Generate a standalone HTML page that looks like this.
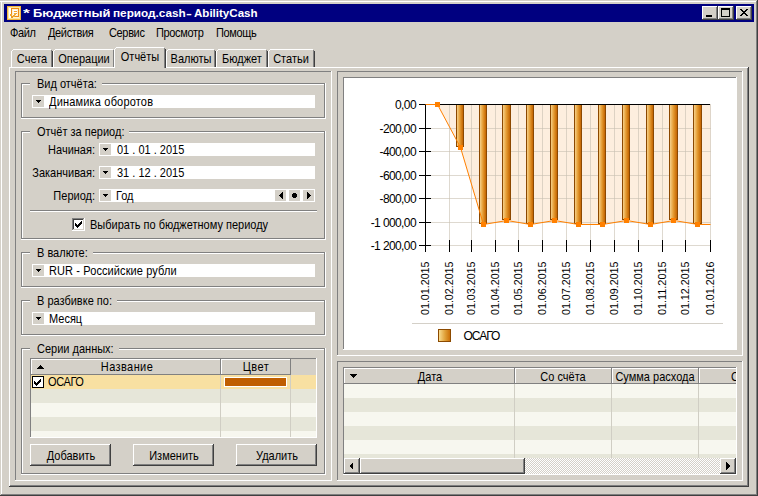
<!DOCTYPE html>
<html><head><meta charset="utf-8">
<style>
*{margin:0;padding:0;box-sizing:border-box}
html,body{width:758px;height:496px;overflow:hidden;background:#D4D0C8}
body{position:relative;font-family:"Liberation Sans",sans-serif;font-size:11px;color:#000}
.a{position:absolute}
.t{position:absolute;white-space:nowrap;line-height:13px;font-size:11px;letter-spacing:0;transform:scaleY(1.12);transform-origin:0 0}
.m{font-size:11px;line-height:13px;letter-spacing:0}
.lbl{position:absolute;background:#D4D0C8;white-space:nowrap;line-height:13px;font-size:11px;letter-spacing:0;padding:0 5px 0 7px}.lbl span{display:inline-block;transform:scaleY(1.12);transform-origin:0 0}
</style></head><body>
<div class="a" style="left:0px;top:1px;width:758px;height:1px;background:#FFFFFF"></div>
<div class="a" style="left:1px;top:1px;width:1px;height:494px;background:#FFFFFF"></div>
<div class="a" style="left:757px;top:0px;width:1px;height:496px;background:#404040"></div>
<div class="a" style="left:0px;top:495px;width:758px;height:1px;background:#404040"></div>
<div class="a" style="left:756px;top:1px;width:1px;height:494px;background:#808080"></div>
<div class="a" style="left:1px;top:494px;width:756px;height:1px;background:#808080"></div>
<div class="a" style="left:4px;top:4px;width:750px;height:18px;background:#000080"></div>
<svg class="a" style="left:7px;top:6px" width="14" height="14" shape-rendering="crispEdges">
 <rect x="0" y="0" width="14" height="14" fill="#F2B640"/>
 <rect x="1" y="1" width="12" height="12" fill="#FCE6A0"/>
 <rect x="2" y="2" width="10" height="10" fill="#FFF3D2"/>
 <rect x="2" y="2" width="2" height="10" fill="#FFFFFF"/>
 <rect x="4" y="2" width="8" height="9" fill="#EE8A14"/>
 <rect x="5" y="3" width="6" height="7" fill="#FFF0D0"/>
 <rect x="6" y="4" width="4" height="1" fill="#FFFFFF"/><rect x="6" y="6" width="4" height="1" fill="#FFFFFF"/><rect x="6" y="8" width="4" height="1" fill="#FFFFFF"/>
 <rect x="7" y="5" width="3" height="1" fill="#F0A030"/><rect x="7" y="7" width="3" height="1" fill="#F0A030"/>
 <rect x="3" y="8" width="2" height="2" fill="#F0A830"/><rect x="4" y="10" width="2" height="2" fill="#E89820"/><rect x="6" y="9" width="2" height="2" fill="#F0A830"/><rect x="7" y="7" width="2" height="2" fill="#F0B040"/>
</svg>
<div class="t" style="left:23px;top:7px;color:#fff;font-weight:bold;font-size:11px;line-height:13px;letter-spacing:0;transform:scaleX(1.6);transform-origin:0 0">*</div>
<div class="t" style="left:33px;top:7px;color:#fff;font-weight:bold;font-size:11px;line-height:13px;letter-spacing:0;transform:scaleX(1.175);transform-origin:0 0">Бюджетный</div>
<div class="t" style="left:112.6px;top:7px;color:#fff;font-weight:bold;font-size:11px;line-height:13px;letter-spacing:0;transform:scaleX(1.07);transform-origin:0 0">период.cash</div>
<div class="t" style="left:185.5px;top:7px;color:#fff;font-weight:bold;font-size:11px;line-height:13px;letter-spacing:0;transform:scaleX(1.6);transform-origin:0 0">-</div>
<div class="t" style="left:194px;top:7px;color:#fff;font-weight:bold;font-size:11px;line-height:13px;letter-spacing:0;transform:scaleX(1.05);transform-origin:0 0">AbilityCash</div>
<div class="a" style="left:702px;top:6px;width:16px;height:14px;background:#D4D0C8"></div>
<div class="a" style="left:702px;top:6px;width:16px;height:1px;background:#FFFFFF"></div>
<div class="a" style="left:702px;top:6px;width:1px;height:14px;background:#FFFFFF"></div>
<div class="a" style="left:702px;top:19px;width:16px;height:1px;background:#404040"></div>
<div class="a" style="left:717px;top:6px;width:1px;height:14px;background:#404040"></div>
<div class="a" style="left:703px;top:18px;width:14px;height:1px;background:#808080"></div>
<div class="a" style="left:716px;top:7px;width:1px;height:12px;background:#808080"></div>
<div class="a" style="left:706px;top:15px;width:6px;height:2px;background:#000"></div>
<div class="a" style="left:718px;top:6px;width:16px;height:14px;background:#D4D0C8"></div>
<div class="a" style="left:718px;top:6px;width:16px;height:1px;background:#FFFFFF"></div>
<div class="a" style="left:718px;top:6px;width:1px;height:14px;background:#FFFFFF"></div>
<div class="a" style="left:718px;top:19px;width:16px;height:1px;background:#404040"></div>
<div class="a" style="left:733px;top:6px;width:1px;height:14px;background:#404040"></div>
<div class="a" style="left:719px;top:18px;width:14px;height:1px;background:#808080"></div>
<div class="a" style="left:732px;top:7px;width:1px;height:12px;background:#808080"></div>
<div class="a" style="left:721px;top:8px;width:9px;height:2px;background:#000"></div>
<div class="a" style="left:721px;top:8px;width:1px;height:9px;background:#000"></div>
<div class="a" style="left:729px;top:8px;width:1px;height:9px;background:#000"></div>
<div class="a" style="left:721px;top:16px;width:9px;height:1px;background:#000"></div>
<div class="a" style="left:736px;top:6px;width:16px;height:14px;background:#D4D0C8"></div>
<div class="a" style="left:736px;top:6px;width:16px;height:1px;background:#FFFFFF"></div>
<div class="a" style="left:736px;top:6px;width:1px;height:14px;background:#FFFFFF"></div>
<div class="a" style="left:736px;top:19px;width:16px;height:1px;background:#404040"></div>
<div class="a" style="left:751px;top:6px;width:1px;height:14px;background:#404040"></div>
<div class="a" style="left:737px;top:18px;width:14px;height:1px;background:#808080"></div>
<div class="a" style="left:750px;top:7px;width:1px;height:12px;background:#808080"></div>
<svg class="a" style="left:736px;top:6px" width="16" height="14" shape-rendering="crispEdges"><g fill="#000"><rect x="4" y="3" width="2" height="1"/><rect x="10" y="3" width="2" height="1"/><rect x="5" y="4" width="2" height="1"/><rect x="9" y="4" width="2" height="1"/><rect x="6" y="5" width="2" height="1"/><rect x="8" y="5" width="2" height="1"/><rect x="7" y="6" width="2" height="1"/><rect x="7" y="6" width="2" height="1"/><rect x="8" y="7" width="2" height="1"/><rect x="6" y="7" width="2" height="1"/><rect x="9" y="8" width="2" height="1"/><rect x="5" y="8" width="2" height="1"/><rect x="10" y="9" width="2" height="1"/><rect x="4" y="9" width="2" height="1"/></g></svg>
<div class="t" style="left:10px;top:26px;font-size:11px;line-height:13px;letter-spacing:-0.35px">Файл</div>
<div class="t" style="left:48px;top:26px;font-size:11px;line-height:13px;letter-spacing:-0.35px">Действия</div>
<div class="t" style="left:109px;top:26px;font-size:11px;line-height:13px;letter-spacing:-0.35px">Сервис</div>
<div class="t" style="left:156px;top:26px;font-size:11px;line-height:13px;letter-spacing:-0.35px">Просмотр</div>
<div class="t" style="left:216px;top:26px;font-size:11px;line-height:13px;letter-spacing:-0.35px">Помощь</div>
<div class="a" style="left:9px;top:67px;width:740px;height:1px;background:#FFFFFF"></div>
<div class="a" style="left:9px;top:67px;width:1px;height:420px;background:#FFFFFF"></div>
<div class="a" style="left:748px;top:67px;width:1px;height:420px;background:#404040"></div>
<div class="a" style="left:9px;top:486px;width:740px;height:1px;background:#404040"></div>
<div class="a" style="left:747px;top:68px;width:1px;height:418px;background:#808080"></div>
<div class="a" style="left:10px;top:485px;width:738px;height:1px;background:#808080"></div>
<div class="a" style="left:11px;top:49px;width:42px;height:18px;background:#D4D0C8"></div>
<div class="a" style="left:11px;top:51px;width:1px;height:16px;background:#FFFFFF"></div>
<div class="a" style="left:12px;top:50px;width:1px;height:1px;background:#FFFFFF"></div>
<div class="a" style="left:13px;top:49px;width:38px;height:1px;background:#FFFFFF"></div>
<div class="a" style="left:51px;top:50px;width:1px;height:17px;background:#808080"></div>
<div class="a" style="left:52px;top:51px;width:1px;height:16px;background:#404040"></div>
<div class="t" style="left:-118px;top:52px;width:300px;text-align:center;">Счета</div>
<div class="a" style="left:53px;top:49px;width:62px;height:18px;background:#D4D0C8"></div>
<div class="a" style="left:53px;top:51px;width:1px;height:16px;background:#FFFFFF"></div>
<div class="a" style="left:54px;top:50px;width:1px;height:1px;background:#FFFFFF"></div>
<div class="a" style="left:55px;top:49px;width:58px;height:1px;background:#FFFFFF"></div>
<div class="a" style="left:113px;top:50px;width:1px;height:17px;background:#808080"></div>
<div class="a" style="left:114px;top:51px;width:1px;height:16px;background:#404040"></div>
<div class="t" style="left:-66px;top:52px;width:300px;text-align:center;">Операции</div>
<div class="a" style="left:166px;top:49px;width:50px;height:18px;background:#D4D0C8"></div>
<div class="a" style="left:166px;top:51px;width:1px;height:16px;background:#FFFFFF"></div>
<div class="a" style="left:167px;top:50px;width:1px;height:1px;background:#FFFFFF"></div>
<div class="a" style="left:168px;top:49px;width:46px;height:1px;background:#FFFFFF"></div>
<div class="a" style="left:214px;top:50px;width:1px;height:17px;background:#808080"></div>
<div class="a" style="left:215px;top:51px;width:1px;height:16px;background:#404040"></div>
<div class="t" style="left:41px;top:52px;width:300px;text-align:center;">Валюты</div>
<div class="a" style="left:216px;top:49px;width:52px;height:18px;background:#D4D0C8"></div>
<div class="a" style="left:216px;top:51px;width:1px;height:16px;background:#FFFFFF"></div>
<div class="a" style="left:217px;top:50px;width:1px;height:1px;background:#FFFFFF"></div>
<div class="a" style="left:218px;top:49px;width:48px;height:1px;background:#FFFFFF"></div>
<div class="a" style="left:266px;top:50px;width:1px;height:17px;background:#808080"></div>
<div class="a" style="left:267px;top:51px;width:1px;height:16px;background:#404040"></div>
<div class="t" style="left:92px;top:52px;width:300px;text-align:center;">Бюджет</div>
<div class="a" style="left:268px;top:49px;width:47px;height:18px;background:#D4D0C8"></div>
<div class="a" style="left:268px;top:51px;width:1px;height:16px;background:#FFFFFF"></div>
<div class="a" style="left:269px;top:50px;width:1px;height:1px;background:#FFFFFF"></div>
<div class="a" style="left:270px;top:49px;width:43px;height:1px;background:#FFFFFF"></div>
<div class="a" style="left:313px;top:50px;width:1px;height:17px;background:#808080"></div>
<div class="a" style="left:314px;top:51px;width:1px;height:16px;background:#404040"></div>
<div class="t" style="left:141px;top:52px;width:300px;text-align:center;">Статьи</div>
<div class="a" style="left:114px;top:47px;width:52px;height:21px;background:#D4D0C8"></div>
<div class="a" style="left:114px;top:49px;width:1px;height:19px;background:#FFFFFF"></div>
<div class="a" style="left:115px;top:48px;width:1px;height:1px;background:#FFFFFF"></div>
<div class="a" style="left:116px;top:47px;width:48px;height:1px;background:#FFFFFF"></div>
<div class="a" style="left:164px;top:48px;width:1px;height:20px;background:#808080"></div>
<div class="a" style="left:165px;top:49px;width:1px;height:19px;background:#404040"></div>
<div class="t" style="left:-10px;top:50px;width:300px;text-align:center;">Отчёты</div>
<div class="a" style="left:15px;top:71px;width:317px;height:1px;background:#808080"></div>
<div class="a" style="left:15px;top:71px;width:1px;height:410px;background:#808080"></div>
<div class="a" style="left:15px;top:480px;width:317px;height:1px;background:#FFFFFF"></div>
<div class="a" style="left:331px;top:71px;width:1px;height:410px;background:#FFFFFF"></div>
<div class="a" style="left:21px;top:83px;width:304px;height:1px;background:#808080"></div>
<div class="a" style="left:21px;top:83px;width:1px;height:35px;background:#808080"></div>
<div class="a" style="left:21px;top:117px;width:304px;height:1px;background:#808080"></div>
<div class="a" style="left:324px;top:83px;width:1px;height:35px;background:#808080"></div>
<div class="a" style="left:22px;top:84px;width:302px;height:1px;background:#FFFFFF"></div>
<div class="a" style="left:22px;top:84px;width:1px;height:33px;background:#FFFFFF"></div>
<div class="a" style="left:21px;top:118px;width:305px;height:1px;background:#FFFFFF"></div>
<div class="a" style="left:325px;top:83px;width:1px;height:36px;background:#FFFFFF"></div>
<div class="lbl" style="left:30px;top:77px;height:13px"><span>Вид отчёта:</span></div>
<div class="a" style="left:32px;top:95px;width:283px;height:13px;background:#FFFFFF"></div>
<div class="a" style="left:33px;top:96px;width:11px;height:11px;background:#D4D0C8"></div>
<div class="a" style="left:36px;top:100px;width:5px;height:1px;background:#000"></div>
<div class="a" style="left:37px;top:101px;width:3px;height:1px;background:#000"></div>
<div class="a" style="left:38px;top:102px;width:1px;height:1px;background:#000"></div>
<div class="t" style="left:49px;top:95px;letter-spacing:0.18px">Динамика оборотов</div>
<div class="a" style="left:21px;top:131px;width:304px;height:1px;background:#808080"></div>
<div class="a" style="left:21px;top:131px;width:1px;height:108px;background:#808080"></div>
<div class="a" style="left:21px;top:238px;width:304px;height:1px;background:#808080"></div>
<div class="a" style="left:324px;top:131px;width:1px;height:108px;background:#808080"></div>
<div class="a" style="left:22px;top:132px;width:302px;height:1px;background:#FFFFFF"></div>
<div class="a" style="left:22px;top:132px;width:1px;height:106px;background:#FFFFFF"></div>
<div class="a" style="left:21px;top:239px;width:305px;height:1px;background:#FFFFFF"></div>
<div class="a" style="left:325px;top:131px;width:1px;height:109px;background:#FFFFFF"></div>
<div class="lbl" style="left:30px;top:125px;height:13px"><span>Отчёт за период:</span></div>
<div class="t" style="left:-205px;top:143px;width:300px;text-align:right;">Начиная:</div>
<div class="a" style="left:99px;top:143px;width:216px;height:13px;background:#FFFFFF"></div>
<div class="a" style="left:100px;top:144px;width:11px;height:11px;background:#D4D0C8"></div>
<div class="a" style="left:103px;top:148px;width:5px;height:1px;background:#000"></div>
<div class="a" style="left:104px;top:149px;width:3px;height:1px;background:#000"></div>
<div class="a" style="left:105px;top:150px;width:1px;height:1px;background:#000"></div>
<div class="t" style="left:117px;top:143px;letter-spacing:0px">01 . 01 . 2015</div>
<div class="t" style="left:-205px;top:166px;width:300px;text-align:right;">Заканчивая:</div>
<div class="a" style="left:99px;top:166px;width:216px;height:13px;background:#FFFFFF"></div>
<div class="a" style="left:100px;top:167px;width:11px;height:11px;background:#D4D0C8"></div>
<div class="a" style="left:103px;top:171px;width:5px;height:1px;background:#000"></div>
<div class="a" style="left:104px;top:172px;width:3px;height:1px;background:#000"></div>
<div class="a" style="left:105px;top:173px;width:1px;height:1px;background:#000"></div>
<div class="t" style="left:117px;top:166px;letter-spacing:0px">31 . 12 . 2015</div>
<div class="t" style="left:-205px;top:189px;width:300px;text-align:right;">Период:</div>
<div class="a" style="left:99px;top:189px;width:216px;height:13px;background:#FFFFFF"></div>
<div class="a" style="left:100px;top:190px;width:11px;height:11px;background:#D4D0C8"></div>
<div class="a" style="left:103px;top:194px;width:5px;height:1px;background:#000"></div>
<div class="a" style="left:104px;top:195px;width:3px;height:1px;background:#000"></div>
<div class="a" style="left:105px;top:196px;width:1px;height:1px;background:#000"></div>
<div class="t" style="left:116px;top:189px;">Год</div>
<div class="a" style="left:275px;top:190px;width:11px;height:11px;background:#D4D0C8"></div>
<div class="a" style="left:289px;top:190px;width:11px;height:11px;background:#D4D0C8"></div>
<div class="a" style="left:303px;top:190px;width:11px;height:11px;background:#D4D0C8"></div>
<div class="a" style="left:279px;top:195px;width:1px;height:1px;background:#000"></div>
<div class="a" style="left:310px;top:195px;width:1px;height:1px;background:#000"></div>
<div class="a" style="left:280px;top:194px;width:1px;height:3px;background:#000"></div>
<div class="a" style="left:309px;top:194px;width:1px;height:3px;background:#000"></div>
<div class="a" style="left:281px;top:193px;width:1px;height:5px;background:#000"></div>
<div class="a" style="left:308px;top:193px;width:1px;height:5px;background:#000"></div>
<div class="a" style="left:282px;top:192px;width:1px;height:7px;background:#000"></div>
<div class="a" style="left:307px;top:192px;width:1px;height:7px;background:#000"></div>
<div class="a" style="left:293px;top:193px;width:3px;height:1px;background:#000"></div>
<div class="a" style="left:292px;top:194px;width:5px;height:1px;background:#000"></div>
<div class="a" style="left:292px;top:195px;width:5px;height:1px;background:#000"></div>
<div class="a" style="left:292px;top:196px;width:5px;height:1px;background:#000"></div>
<div class="a" style="left:293px;top:197px;width:3px;height:1px;background:#000"></div>
<div class="a" style="left:30px;top:210px;width:287px;height:1px;background:#808080"></div>
<div class="a" style="left:30px;top:211px;width:287px;height:1px;background:#FFFFFF"></div>
<div class="a" style="left:72px;top:218px;width:13px;height:13px;background:#FFFFFF"></div>
<div class="a" style="left:72px;top:218px;width:13px;height:1px;background:#808080"></div>
<div class="a" style="left:72px;top:218px;width:1px;height:13px;background:#808080"></div>
<div class="a" style="left:72px;top:230px;width:13px;height:1px;background:#FFFFFF"></div>
<div class="a" style="left:84px;top:218px;width:1px;height:13px;background:#FFFFFF"></div>
<div class="a" style="left:73px;top:219px;width:1px;height:10px;background:#404040"></div>
<div class="a" style="left:73px;top:219px;width:11px;height:1px;background:#404040"></div>
<div class="a" style="left:83px;top:219px;width:1px;height:11px;background:#D4D0C8"></div>
<div class="a" style="left:73px;top:229px;width:11px;height:1px;background:#D4D0C8"></div>
<svg class="a" style="left:72px;top:218px" width="13" height="13" shape-rendering="crispEdges"><g fill="#000"><rect x="3" y="5" width="1" height="3"/><rect x="4" y="6" width="1" height="3"/><rect x="5" y="7" width="1" height="3"/><rect x="6" y="6" width="1" height="3"/><rect x="7" y="5" width="1" height="3"/><rect x="8" y="4" width="1" height="3"/><rect x="9" y="3" width="1" height="3"/></g></svg>
<div class="t" style="left:90px;top:218px;">Выбирать по бюджетному периоду</div>
<div class="a" style="left:21px;top:252px;width:304px;height:1px;background:#808080"></div>
<div class="a" style="left:21px;top:252px;width:1px;height:35px;background:#808080"></div>
<div class="a" style="left:21px;top:286px;width:304px;height:1px;background:#808080"></div>
<div class="a" style="left:324px;top:252px;width:1px;height:35px;background:#808080"></div>
<div class="a" style="left:22px;top:253px;width:302px;height:1px;background:#FFFFFF"></div>
<div class="a" style="left:22px;top:253px;width:1px;height:33px;background:#FFFFFF"></div>
<div class="a" style="left:21px;top:287px;width:305px;height:1px;background:#FFFFFF"></div>
<div class="a" style="left:325px;top:252px;width:1px;height:36px;background:#FFFFFF"></div>
<div class="lbl" style="left:30px;top:246px;height:13px"><span>В валюте:</span></div>
<div class="a" style="left:32px;top:264px;width:283px;height:13px;background:#FFFFFF"></div>
<div class="a" style="left:33px;top:265px;width:11px;height:11px;background:#D4D0C8"></div>
<div class="a" style="left:36px;top:269px;width:5px;height:1px;background:#000"></div>
<div class="a" style="left:37px;top:270px;width:3px;height:1px;background:#000"></div>
<div class="a" style="left:38px;top:271px;width:1px;height:1px;background:#000"></div>
<div class="t" style="left:49px;top:264px;letter-spacing:0.1px">RUR - Российские рубли</div>
<div class="a" style="left:21px;top:300px;width:304px;height:1px;background:#808080"></div>
<div class="a" style="left:21px;top:300px;width:1px;height:35px;background:#808080"></div>
<div class="a" style="left:21px;top:334px;width:304px;height:1px;background:#808080"></div>
<div class="a" style="left:324px;top:300px;width:1px;height:35px;background:#808080"></div>
<div class="a" style="left:22px;top:301px;width:302px;height:1px;background:#FFFFFF"></div>
<div class="a" style="left:22px;top:301px;width:1px;height:33px;background:#FFFFFF"></div>
<div class="a" style="left:21px;top:335px;width:305px;height:1px;background:#FFFFFF"></div>
<div class="a" style="left:325px;top:300px;width:1px;height:36px;background:#FFFFFF"></div>
<div class="lbl" style="left:30px;top:294px;height:13px"><span>В разбивке по:</span></div>
<div class="a" style="left:32px;top:312px;width:283px;height:13px;background:#FFFFFF"></div>
<div class="a" style="left:33px;top:313px;width:11px;height:11px;background:#D4D0C8"></div>
<div class="a" style="left:36px;top:317px;width:5px;height:1px;background:#000"></div>
<div class="a" style="left:37px;top:318px;width:3px;height:1px;background:#000"></div>
<div class="a" style="left:38px;top:319px;width:1px;height:1px;background:#000"></div>
<div class="t" style="left:49px;top:312px;">Месяц</div>
<div class="a" style="left:21px;top:348px;width:304px;height:1px;background:#808080"></div>
<div class="a" style="left:21px;top:348px;width:1px;height:126px;background:#808080"></div>
<div class="a" style="left:21px;top:473px;width:304px;height:1px;background:#808080"></div>
<div class="a" style="left:324px;top:348px;width:1px;height:126px;background:#808080"></div>
<div class="a" style="left:22px;top:349px;width:302px;height:1px;background:#FFFFFF"></div>
<div class="a" style="left:22px;top:349px;width:1px;height:124px;background:#FFFFFF"></div>
<div class="a" style="left:21px;top:474px;width:305px;height:1px;background:#FFFFFF"></div>
<div class="a" style="left:325px;top:348px;width:1px;height:127px;background:#FFFFFF"></div>
<div class="lbl" style="left:30px;top:342px;height:13px"><span>Серии данных:</span></div>
<div class="a" style="left:30px;top:358px;width:287px;height:1px;background:#808080"></div>
<div class="a" style="left:30px;top:358px;width:1px;height:80px;background:#808080"></div>
<div class="a" style="left:30px;top:437px;width:287px;height:1px;background:#FFFFFF"></div>
<div class="a" style="left:316px;top:358px;width:1px;height:80px;background:#FFFFFF"></div>
<div class="a" style="left:31px;top:374px;width:285px;height:63px;background:#F7F7EF"></div>
<div class="a" style="left:31px;top:375px;width:285px;height:14px;background:#F8E0A2"></div>
<div class="a" style="left:31px;top:389px;width:285px;height:14px;background:#E6E6D9"></div>
<div class="a" style="left:31px;top:403px;width:285px;height:14px;background:#F7F7EF"></div>
<div class="a" style="left:31px;top:417px;width:285px;height:14px;background:#E6E6D9"></div>
<div class="a" style="left:31px;top:431px;width:285px;height:6px;background:#F7F7EF"></div>
<div class="a" style="left:220px;top:375px;width:1px;height:62px;background:#D0CEC4"></div>
<div class="a" style="left:290px;top:375px;width:1px;height:62px;background:#D0CEC4"></div>
<div class="a" style="left:291px;top:359px;width:25px;height:16px;background:#D4D0C8"></div>
<div class="a" style="left:31px;top:359px;width:190px;height:16px;background:#D4D0C8"></div>
<div class="a" style="left:31px;top:359px;width:190px;height:1px;background:#FFFFFF"></div>
<div class="a" style="left:31px;top:359px;width:1px;height:16px;background:#FFFFFF"></div>
<div class="a" style="left:220px;top:359px;width:1px;height:16px;background:#808080"></div>
<div class="a" style="left:31px;top:374px;width:190px;height:1px;background:#808080"></div>
<div class="a" style="left:221px;top:359px;width:70px;height:16px;background:#D4D0C8"></div>
<div class="a" style="left:221px;top:359px;width:70px;height:1px;background:#FFFFFF"></div>
<div class="a" style="left:221px;top:359px;width:1px;height:16px;background:#FFFFFF"></div>
<div class="a" style="left:290px;top:359px;width:1px;height:16px;background:#808080"></div>
<div class="a" style="left:221px;top:374px;width:70px;height:1px;background:#808080"></div>
<div class="a" style="left:37px;top:368px;width:7px;height:1px;background:#000"></div>
<div class="a" style="left:38px;top:367px;width:5px;height:1px;background:#000"></div>
<div class="a" style="left:39px;top:366px;width:3px;height:1px;background:#000"></div>
<div class="a" style="left:40px;top:365px;width:1px;height:1px;background:#000"></div>
<div class="t" style="left:-23px;top:360px;width:300px;text-align:center;letter-spacing:0.4px">Название</div>
<div class="t" style="left:106px;top:360px;width:300px;text-align:center;letter-spacing:0.5px">Цвет</div>
<div class="a" style="left:32px;top:376px;width:12px;height:12px;background:#000"></div>
<div class="a" style="left:33px;top:377px;width:10px;height:10px;background:#FFFFFF"></div>
<svg class="a" style="left:32px;top:376px" width="12" height="12" shape-rendering="crispEdges"><g fill="#000"><rect x="2" y="5" width="1" height="3"/><rect x="3" y="6" width="1" height="3"/><rect x="4" y="7" width="1" height="3"/><rect x="5" y="6" width="1" height="3"/><rect x="6" y="5" width="1" height="3"/><rect x="7" y="4" width="1" height="3"/><rect x="8" y="3" width="1" height="3"/></g></svg>
<div class="t" style="left:48px;top:375px;letter-spacing:-0.4px">ОСАГО</div>
<div class="a" style="left:224px;top:377px;width:63px;height:10px;background:#FFFFFF"></div>
<div class="a" style="left:225px;top:378px;width:61px;height:8px;background:#C05E00"></div>
<div class="a" style="left:30px;top:444px;width:81px;height:22px;background:#D4D0C8"></div>
<div class="a" style="left:30px;top:444px;width:81px;height:1px;background:#FFFFFF"></div>
<div class="a" style="left:30px;top:444px;width:1px;height:22px;background:#FFFFFF"></div>
<div class="a" style="left:30px;top:465px;width:81px;height:1px;background:#404040"></div>
<div class="a" style="left:110px;top:444px;width:1px;height:22px;background:#404040"></div>
<div class="a" style="left:31px;top:464px;width:79px;height:1px;background:#808080"></div>
<div class="a" style="left:109px;top:445px;width:1px;height:20px;background:#808080"></div>
<div class="t" style="left:-79px;top:449px;width:300px;text-align:center;">Добавить</div>
<div class="a" style="left:133px;top:444px;width:81px;height:22px;background:#D4D0C8"></div>
<div class="a" style="left:133px;top:444px;width:81px;height:1px;background:#FFFFFF"></div>
<div class="a" style="left:133px;top:444px;width:1px;height:22px;background:#FFFFFF"></div>
<div class="a" style="left:133px;top:465px;width:81px;height:1px;background:#404040"></div>
<div class="a" style="left:213px;top:444px;width:1px;height:22px;background:#404040"></div>
<div class="a" style="left:134px;top:464px;width:79px;height:1px;background:#808080"></div>
<div class="a" style="left:212px;top:445px;width:1px;height:20px;background:#808080"></div>
<div class="t" style="left:24px;top:449px;width:300px;text-align:center;">Изменить</div>
<div class="a" style="left:236px;top:444px;width:81px;height:22px;background:#D4D0C8"></div>
<div class="a" style="left:236px;top:444px;width:81px;height:1px;background:#FFFFFF"></div>
<div class="a" style="left:236px;top:444px;width:1px;height:22px;background:#FFFFFF"></div>
<div class="a" style="left:236px;top:465px;width:81px;height:1px;background:#404040"></div>
<div class="a" style="left:316px;top:444px;width:1px;height:22px;background:#404040"></div>
<div class="a" style="left:237px;top:464px;width:79px;height:1px;background:#808080"></div>
<div class="a" style="left:315px;top:445px;width:1px;height:20px;background:#808080"></div>
<div class="t" style="left:127px;top:449px;width:300px;text-align:center;">Удалить</div>
<div class="a" style="left:337px;top:71px;width:406px;height:1px;background:#808080"></div>
<div class="a" style="left:337px;top:71px;width:1px;height:285px;background:#808080"></div>
<div class="a" style="left:337px;top:355px;width:406px;height:1px;background:#FFFFFF"></div>
<div class="a" style="left:742px;top:71px;width:1px;height:285px;background:#FFFFFF"></div>
<div class="a" style="left:343px;top:77px;width:394px;height:273px;background:#FFFFFF"></div>
<div class="a" style="left:343px;top:77px;width:394px;height:1px;background:#808080"></div>
<div class="a" style="left:343px;top:77px;width:1px;height:273px;background:#808080"></div>
<div class="a" style="left:343px;top:349px;width:394px;height:1px;background:#FFFFFF"></div>
<div class="a" style="left:736px;top:77px;width:1px;height:273px;background:#FFFFFF"></div>
<svg class="a" style="left:0;top:0" width="758" height="496" id="chart"></svg>
<div class="a" style="left:337px;top:361px;width:406px;height:1px;background:#808080"></div>
<div class="a" style="left:337px;top:361px;width:1px;height:120px;background:#808080"></div>
<div class="a" style="left:337px;top:480px;width:406px;height:1px;background:#FFFFFF"></div>
<div class="a" style="left:742px;top:361px;width:1px;height:120px;background:#FFFFFF"></div>
<svg class="a" style="left:0;top:0" width="758" height="496"><defs><linearGradient id="bg" x1="0" x2="1" y1="0" y2="0"><stop offset="0" stop-color="#F6D088"/><stop offset="0.5" stop-color="#E49A30"/><stop offset="1" stop-color="#C46400"/></linearGradient><linearGradient id="lg" x1="0" x2="1" y1="0" y2="0"><stop offset="0" stop-color="#F8DC90"/><stop offset="0.55" stop-color="#E0A038"/><stop offset="1" stop-color="#CC7008"/></linearGradient></defs><polygon points="425.5,104.5 437.5,104.5 460.5,147.5 483.5,224.5 507.0,220.5 530.5,224.5 554.5,220.5 578.5,224.5 602.5,224.5 626.5,220.5 650.5,224.5 674.0,220.5 698.0,224.5 710.5,224.5 710.5,104.5" fill="#FDEEDE"/><rect x="426" y="128" width="285" height="1" fill="#C8C0B0" fill-opacity="0.6"/><rect x="426" y="151" width="285" height="1" fill="#C8C0B0" fill-opacity="0.6"/><rect x="426" y="175" width="285" height="1" fill="#C8C0B0" fill-opacity="0.6"/><rect x="426" y="198" width="285" height="1" fill="#C8C0B0" fill-opacity="0.6"/><rect x="426" y="222" width="285" height="1" fill="#C8C0B0" fill-opacity="0.6"/><rect x="426" y="245" width="285" height="1" fill="#C8C0B0" fill-opacity="0.6"/><rect x="449" y="104" width="1" height="142" fill="#C8C0B0" fill-opacity="0.6"/><rect x="471" y="104" width="1" height="142" fill="#C8C0B0" fill-opacity="0.6"/><rect x="495" y="104" width="1" height="142" fill="#C8C0B0" fill-opacity="0.6"/><rect x="518" y="104" width="1" height="142" fill="#C8C0B0" fill-opacity="0.6"/><rect x="542" y="104" width="1" height="142" fill="#C8C0B0" fill-opacity="0.6"/><rect x="566" y="104" width="1" height="142" fill="#C8C0B0" fill-opacity="0.6"/><rect x="590" y="104" width="1" height="142" fill="#C8C0B0" fill-opacity="0.6"/><rect x="614" y="104" width="1" height="142" fill="#C8C0B0" fill-opacity="0.6"/><rect x="638" y="104" width="1" height="142" fill="#C8C0B0" fill-opacity="0.6"/><rect x="662" y="104" width="1" height="142" fill="#C8C0B0" fill-opacity="0.6"/><rect x="685" y="104" width="1" height="142" fill="#C8C0B0" fill-opacity="0.6"/><rect x="710" y="104" width="1" height="142" fill="#C8C0B0" fill-opacity="0.6"/><rect x="456" y="104" width="8" height="43" fill="#8C4800"/><rect x="457" y="105" width="6" height="41" fill="url(#bg)"/><rect x="479" y="104" width="8" height="120" fill="#8C4800"/><rect x="480" y="105" width="6" height="118" fill="url(#bg)"/><rect x="502" y="104" width="9" height="116" fill="#8C4800"/><rect x="503" y="105" width="7" height="114" fill="url(#bg)"/><rect x="526" y="104" width="8" height="120" fill="#8C4800"/><rect x="527" y="105" width="6" height="118" fill="url(#bg)"/><rect x="550" y="104" width="8" height="116" fill="#8C4800"/><rect x="551" y="105" width="6" height="114" fill="url(#bg)"/><rect x="574" y="104" width="8" height="120" fill="#8C4800"/><rect x="575" y="105" width="6" height="118" fill="url(#bg)"/><rect x="598" y="104" width="8" height="120" fill="#8C4800"/><rect x="599" y="105" width="6" height="118" fill="url(#bg)"/><rect x="622" y="104" width="8" height="116" fill="#8C4800"/><rect x="623" y="105" width="6" height="114" fill="url(#bg)"/><rect x="646" y="104" width="8" height="120" fill="#8C4800"/><rect x="647" y="105" width="6" height="118" fill="url(#bg)"/><rect x="669" y="104" width="9" height="116" fill="#8C4800"/><rect x="670" y="105" width="7" height="114" fill="url(#bg)"/><rect x="693" y="104" width="9" height="120" fill="#8C4800"/><rect x="694" y="105" width="7" height="118" fill="url(#bg)"/><rect x="425" y="104" width="1" height="148" fill="#000"/><rect x="425" y="104" width="285" height="1" fill="#000"/><rect x="419" y="104" width="12" height="1" fill="#000"/><rect x="419" y="128" width="12" height="1" fill="#000"/><rect x="419" y="151" width="12" height="1" fill="#000"/><rect x="419" y="175" width="12" height="1" fill="#000"/><rect x="419" y="198" width="12" height="1" fill="#000"/><rect x="419" y="222" width="12" height="1" fill="#000"/><rect x="419" y="245" width="12" height="1" fill="#000"/><rect x="449" y="240" width="1" height="12" fill="#000"/><rect x="471" y="240" width="1" height="12" fill="#000"/><rect x="495" y="240" width="1" height="12" fill="#000"/><rect x="518" y="240" width="1" height="12" fill="#000"/><rect x="542" y="240" width="1" height="12" fill="#000"/><rect x="566" y="240" width="1" height="12" fill="#000"/><rect x="590" y="240" width="1" height="12" fill="#000"/><rect x="614" y="240" width="1" height="12" fill="#000"/><rect x="638" y="240" width="1" height="12" fill="#000"/><rect x="662" y="240" width="1" height="12" fill="#000"/><rect x="685" y="240" width="1" height="12" fill="#000"/><rect x="710" y="240" width="1" height="12" fill="#000"/><polyline points="425.5,104.5 437.5,104.5 460.5,147.5 483.5,224.5 507.0,220.5 530.5,224.5 554.5,220.5 578.5,224.5 602.5,224.5 626.5,220.5 650.5,224.5 674.0,220.5 698.0,224.5 710.5,224.5" fill="none" stroke="#FF8000" stroke-width="1"/><rect x="435" y="102" width="5" height="5" fill="#FF8000"/><rect x="458" y="145" width="5" height="5" fill="#FF8000"/><rect x="481" y="222" width="5" height="5" fill="#FF8000"/><rect x="504" y="218" width="5" height="5" fill="#FF8000"/><rect x="528" y="222" width="5" height="5" fill="#FF8000"/><rect x="552" y="218" width="5" height="5" fill="#FF8000"/><rect x="576" y="222" width="5" height="5" fill="#FF8000"/><rect x="600" y="222" width="5" height="5" fill="#FF8000"/><rect x="624" y="218" width="5" height="5" fill="#FF8000"/><rect x="648" y="222" width="5" height="5" fill="#FF8000"/><rect x="671" y="218" width="5" height="5" fill="#FF8000"/><rect x="695" y="222" width="5" height="5" fill="#FF8000"/><text x="416" y="108.6" text-anchor="end" font-family="Liberation Sans" font-size="12" letter-spacing="-0.6">0,00</text><text x="416" y="132.6" text-anchor="end" font-family="Liberation Sans" font-size="12" letter-spacing="-0.6">-200,00</text><text x="416" y="155.6" text-anchor="end" font-family="Liberation Sans" font-size="12" letter-spacing="-0.6">-400,00</text><text x="416" y="179.6" text-anchor="end" font-family="Liberation Sans" font-size="12" letter-spacing="-0.6">-600,00</text><text x="416" y="202.6" text-anchor="end" font-family="Liberation Sans" font-size="12" letter-spacing="-0.6">-800,00</text><text x="416" y="226.6" text-anchor="end" font-family="Liberation Sans" font-size="12" letter-spacing="-0.6">-1 000,00</text><text x="416" y="249.6" text-anchor="end" font-family="Liberation Sans" font-size="12" letter-spacing="-0.6">-1 200,00</text><text transform="translate(428.5,261.5) rotate(-90)" text-anchor="end" font-family="Liberation Sans" font-size="11" textLength="53.5" lengthAdjust="spacingAndGlyphs">01.01.2015</text><text transform="translate(452.5,261.5) rotate(-90)" text-anchor="end" font-family="Liberation Sans" font-size="11" textLength="53.5" lengthAdjust="spacingAndGlyphs">01.02.2015</text><text transform="translate(474.5,261.5) rotate(-90)" text-anchor="end" font-family="Liberation Sans" font-size="11" textLength="53.5" lengthAdjust="spacingAndGlyphs">01.03.2015</text><text transform="translate(498.5,261.5) rotate(-90)" text-anchor="end" font-family="Liberation Sans" font-size="11" textLength="53.5" lengthAdjust="spacingAndGlyphs">01.04.2015</text><text transform="translate(521.5,261.5) rotate(-90)" text-anchor="end" font-family="Liberation Sans" font-size="11" textLength="53.5" lengthAdjust="spacingAndGlyphs">01.05.2015</text><text transform="translate(545.5,261.5) rotate(-90)" text-anchor="end" font-family="Liberation Sans" font-size="11" textLength="53.5" lengthAdjust="spacingAndGlyphs">01.06.2015</text><text transform="translate(569.5,261.5) rotate(-90)" text-anchor="end" font-family="Liberation Sans" font-size="11" textLength="53.5" lengthAdjust="spacingAndGlyphs">01.07.2015</text><text transform="translate(593.5,261.5) rotate(-90)" text-anchor="end" font-family="Liberation Sans" font-size="11" textLength="53.5" lengthAdjust="spacingAndGlyphs">01.08.2015</text><text transform="translate(617.5,261.5) rotate(-90)" text-anchor="end" font-family="Liberation Sans" font-size="11" textLength="53.5" lengthAdjust="spacingAndGlyphs">01.09.2015</text><text transform="translate(641.5,261.5) rotate(-90)" text-anchor="end" font-family="Liberation Sans" font-size="11" textLength="53.5" lengthAdjust="spacingAndGlyphs">01.10.2015</text><text transform="translate(665.5,261.5) rotate(-90)" text-anchor="end" font-family="Liberation Sans" font-size="11" textLength="53.5" lengthAdjust="spacingAndGlyphs">01.11.2015</text><text transform="translate(688.5,261.5) rotate(-90)" text-anchor="end" font-family="Liberation Sans" font-size="11" textLength="53.5" lengthAdjust="spacingAndGlyphs">01.12.2015</text><text transform="translate(713.5,261.5) rotate(-90)" text-anchor="end" font-family="Liberation Sans" font-size="11" textLength="53.5" lengthAdjust="spacingAndGlyphs">01.01.2016</text><rect x="412" y="323" width="311" height="1" fill="#D4D0C8"/><rect x="438" y="329" width="13" height="13" fill="#8C4A00"/><rect x="439" y="330" width="11" height="11" fill="url(#lg)"/><text x="463.5" y="340.4" font-family="Liberation Sans" font-size="12" letter-spacing="-1">ОСАГО</text></svg>
<div class="a" style="left:343px;top:367px;width:394px;height:1px;background:#808080"></div>
<div class="a" style="left:343px;top:367px;width:1px;height:108px;background:#808080"></div>
<div class="a" style="left:344px;top:384px;width:392px;height:14px;background:#F7F7EF"></div>
<div class="a" style="left:344px;top:398px;width:392px;height:14px;background:#E6E6D9"></div>
<div class="a" style="left:344px;top:412px;width:392px;height:14px;background:#F7F7EF"></div>
<div class="a" style="left:344px;top:426px;width:392px;height:14px;background:#E6E6D9"></div>
<div class="a" style="left:344px;top:440px;width:392px;height:14px;background:#F7F7EF"></div>
<div class="a" style="left:344px;top:454px;width:392px;height:14px;background:#E6E6D9"></div>
<div class="a" style="left:514px;top:384px;width:1px;height:74px;background:#D0CEC4"></div>
<div class="a" style="left:611px;top:384px;width:1px;height:74px;background:#D0CEC4"></div>
<div class="a" style="left:698px;top:384px;width:1px;height:74px;background:#D0CEC4"></div>
<div class="a" style="left:344px;top:368px;width:171px;height:16px;background:#D4D0C8"></div>
<div class="a" style="left:344px;top:368px;width:171px;height:1px;background:#FFFFFF"></div>
<div class="a" style="left:344px;top:368px;width:1px;height:16px;background:#FFFFFF"></div>
<div class="a" style="left:514px;top:368px;width:1px;height:16px;background:#808080"></div>
<div class="a" style="left:344px;top:383px;width:171px;height:1px;background:#808080"></div>
<div class="a" style="left:515px;top:368px;width:97px;height:16px;background:#D4D0C8"></div>
<div class="a" style="left:515px;top:368px;width:97px;height:1px;background:#FFFFFF"></div>
<div class="a" style="left:515px;top:368px;width:1px;height:16px;background:#FFFFFF"></div>
<div class="a" style="left:611px;top:368px;width:1px;height:16px;background:#808080"></div>
<div class="a" style="left:515px;top:383px;width:97px;height:1px;background:#808080"></div>
<div class="a" style="left:612px;top:368px;width:87px;height:16px;background:#D4D0C8"></div>
<div class="a" style="left:612px;top:368px;width:87px;height:1px;background:#FFFFFF"></div>
<div class="a" style="left:612px;top:368px;width:1px;height:16px;background:#FFFFFF"></div>
<div class="a" style="left:698px;top:368px;width:1px;height:16px;background:#808080"></div>
<div class="a" style="left:612px;top:383px;width:87px;height:1px;background:#808080"></div>
<div class="a" style="left:699px;top:368px;width:37px;height:16px;background:#D4D0C8"></div>
<div class="a" style="left:699px;top:368px;width:37px;height:1px;background:#FFFFFF"></div>
<div class="a" style="left:699px;top:368px;width:1px;height:16px;background:#FFFFFF"></div>
<div class="a" style="left:699px;top:383px;width:37px;height:1px;background:#808080"></div>
<div class="a" style="left:350px;top:374px;width:7px;height:1px;background:#000"></div>
<div class="a" style="left:351px;top:375px;width:5px;height:1px;background:#000"></div>
<div class="a" style="left:352px;top:376px;width:3px;height:1px;background:#000"></div>
<div class="a" style="left:353px;top:377px;width:1px;height:1px;background:#000"></div>
<div class="t" style="left:280px;top:370px;width:300px;text-align:center;">Дата</div>
<div class="t" style="left:413px;top:370px;width:300px;text-align:center;">Со счёта</div>
<div class="t" style="left:505px;top:370px;width:300px;text-align:center;">Сумма расхода</div>
<div class="a" style="left:699px;top:368px;width:37px;height:16px;overflow:hidden"><div class="t" style="left:32px;top:2px">Сумма</div></div>
<div class="a" style="left:737px;top:367px;width:5px;height:110px;background:#D4D0C8"></div>
<div class="a" style="left:344px;top:458px;width:392px;height:16px;background-color:#fff;background-image:linear-gradient(45deg,#D4D0C8 25%,transparent 25%,transparent 75%,#D4D0C8 75%),linear-gradient(45deg,#D4D0C8 25%,transparent 25%,transparent 75%,#D4D0C8 75%);background-size:2px 2px;background-position:0 0,1px 1px"></div>
<div class="a" style="left:344px;top:458px;width:16px;height:16px;background:#D4D0C8"></div>
<div class="a" style="left:344px;top:458px;width:16px;height:1px;background:#FFFFFF"></div>
<div class="a" style="left:344px;top:458px;width:1px;height:16px;background:#FFFFFF"></div>
<div class="a" style="left:344px;top:473px;width:16px;height:1px;background:#404040"></div>
<div class="a" style="left:359px;top:458px;width:1px;height:16px;background:#404040"></div>
<div class="a" style="left:345px;top:472px;width:14px;height:1px;background:#808080"></div>
<div class="a" style="left:358px;top:459px;width:1px;height:14px;background:#808080"></div>
<svg class="a" style="left:344px;top:458px" width="16" height="16" shape-rendering="crispEdges"><path d="M5 8 L9 4 L9 12 Z" fill="#000"/></svg>
<div class="a" style="left:360px;top:458px;width:165px;height:16px;background:#D4D0C8"></div>
<div class="a" style="left:360px;top:458px;width:165px;height:1px;background:#FFFFFF"></div>
<div class="a" style="left:360px;top:458px;width:1px;height:16px;background:#FFFFFF"></div>
<div class="a" style="left:360px;top:473px;width:165px;height:1px;background:#404040"></div>
<div class="a" style="left:524px;top:458px;width:1px;height:16px;background:#404040"></div>
<div class="a" style="left:361px;top:472px;width:163px;height:1px;background:#808080"></div>
<div class="a" style="left:523px;top:459px;width:1px;height:14px;background:#808080"></div>
<div class="a" style="left:720px;top:458px;width:16px;height:16px;background:#D4D0C8"></div>
<div class="a" style="left:720px;top:458px;width:16px;height:1px;background:#FFFFFF"></div>
<div class="a" style="left:720px;top:458px;width:1px;height:16px;background:#FFFFFF"></div>
<div class="a" style="left:720px;top:473px;width:16px;height:1px;background:#404040"></div>
<div class="a" style="left:735px;top:458px;width:1px;height:16px;background:#404040"></div>
<div class="a" style="left:721px;top:472px;width:14px;height:1px;background:#808080"></div>
<div class="a" style="left:734px;top:459px;width:1px;height:14px;background:#808080"></div>
<svg class="a" style="left:720px;top:458px" width="16" height="16" shape-rendering="crispEdges"><path d="M10 8 L6 4 L6 12 Z" fill="#000"/></svg>
<div class="a" style="left:343px;top:474px;width:394px;height:1px;background:#FFFFFF"></div>
<div class="a" style="left:736px;top:367px;width:1px;height:108px;background:#FFFFFF"></div>
<div class="a" style="left:337px;top:361px;width:406px;height:1px;background:#808080"></div>
<div class="a" style="left:337px;top:361px;width:1px;height:120px;background:#808080"></div>
<div class="a" style="left:337px;top:480px;width:406px;height:1px;background:#FFFFFF"></div>
<div class="a" style="left:742px;top:361px;width:1px;height:120px;background:#FFFFFF"></div>
</body></html>
